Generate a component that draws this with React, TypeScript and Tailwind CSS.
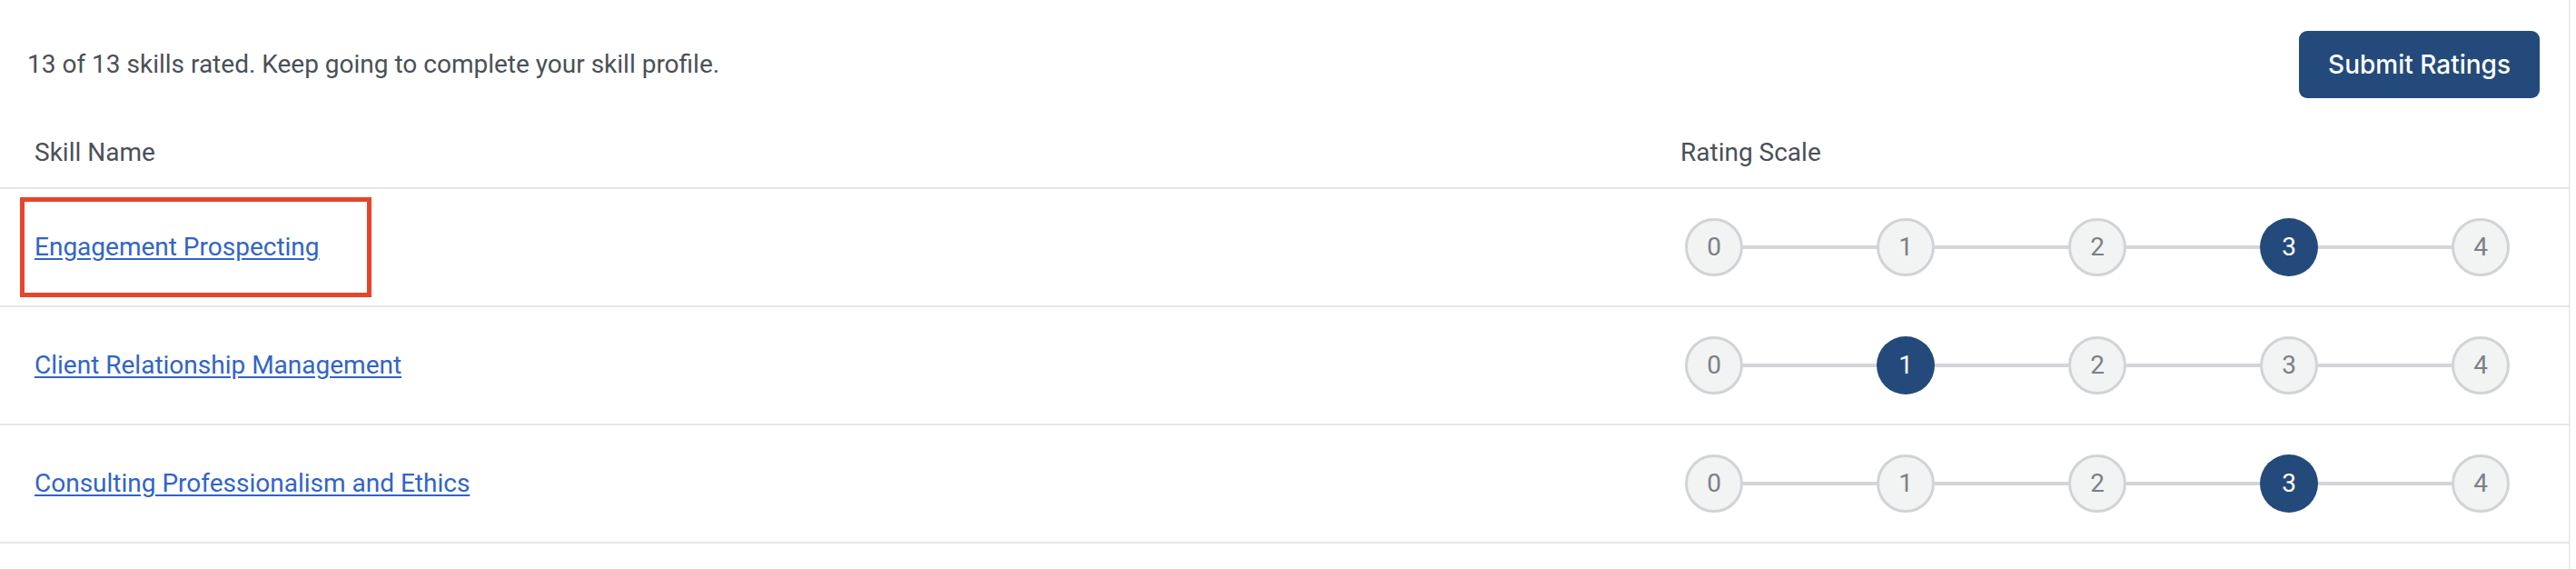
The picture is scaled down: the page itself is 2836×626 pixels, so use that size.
import React from 'react';

interface Skill {
  name: string;
  rating: number;
  highlighted?: boolean;
}

const skills: Skill[] = [
  { name: 'Engagement Prospecting', rating: 3, highlighted: true },
  { name: 'Client Relationship Management', rating: 1 },
  { name: 'Consulting Professionalism and Ethics', rating: 3 },
];

const scale = [0, 1, 2, 3, 4];

const RatingScale: React.FC<{ value: number }> = ({ value }) => (
  <div className="flex items-center w-[908px] ml-[5px]">
    {scale.map((n, i) => (
      <React.Fragment key={n}>
        {i > 0 && <div className="flex-1 h-[4px] bg-[#d3d5d9]" />}
        {n === value ? (
          <div className="w-[64px] h-[64px] rounded-full bg-[#234a7a] flex items-center justify-center text-[28px] text-white">
            {n}
          </div>
        ) : (
          <div className="w-[64px] h-[64px] rounded-full bg-[#f2f3f3] border-[3px] border-[#d1d3d7] flex items-center justify-center text-[28px] text-[#7c8087]">
            {n}
          </div>
        )}
      </React.Fragment>
    ))}
  </div>
);

export default function App() {
  return (
    <div className="w-full h-[626px] overflow-hidden bg-white font-['Roboto',sans-serif]">
      {/* card, top and left edge sit off screen */}
      <div className="-mt-[14px] -ml-[2px] mr-[7px] h-[700px] rounded-2xl border border-[#e4e4e8] bg-white shadow-sm">
        {/* progress + submit */}
        <div className="flex items-center justify-between pt-[47px] pb-[22px] pl-[31px] pr-[32px]">
          <p className="text-[28px] text-[#4a5057]">
            13 of 13 skills rated. Keep going to complete your skill profile.
          </p>
          <button className="h-[74px] px-[32px] rounded-[9px] bg-[#234a7a] text-white text-[28px] font-medium font-['Inter',sans-serif]">
            Submit Ratings
          </button>
        </div>

        {/* table header */}
        <div className="grid grid-cols-[1851px_1fr] h-[78px] items-center border-b-2 border-[#e6e6eb] text-[28px] text-[#4a5057]">
          <div className="pl-[39px]">Skill Name</div>
          <div>Rating Scale</div>
        </div>

        {/* rows */}
        {skills.map((skill) => (
          <div
            key={skill.name}
            className="grid grid-cols-[1851px_1fr] h-[130px] items-center border-b-2 border-[#e6e6eb]"
          >
            <div className="relative h-full flex items-center pl-[39px]">
              {skill.highlighted && (
                <div className="absolute left-[23px] top-[9px] w-[387px] h-[110px] border-[5px] border-[#e8442b]" />
              )}
              <a href="#" className="text-[28px] text-[#3264c8] underline underline-offset-[3px]">
                {skill.name}
              </a>
            </div>
            <div>
              <RatingScale value={skill.rating} />
            </div>
          </div>
        ))}
      </div>
    </div>
  );
}
